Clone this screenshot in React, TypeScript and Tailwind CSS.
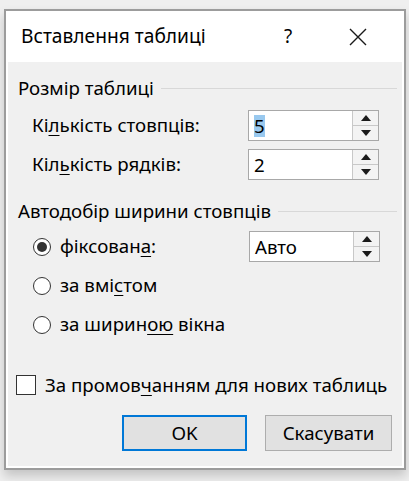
import React from 'react';

const font = { fontFamily: '"Noto Sans", "Open Sans", sans-serif' };

const Arrows = () => (
  <div className="flex w-[26px] flex-col border-l border-[#c8c8c8] bg-[#f3f3f3]">
    <div className="flex flex-1 items-center justify-center border-b border-[#c8c8c8]">
      <svg width="10" height="6" viewBox="0 0 10 6"><path d="M0 6 L5 0 L10 6 Z" fill="#1a1a1a" /></svg>
    </div>
    <div className="flex flex-1 items-center justify-center">
      <svg width="10" height="6" viewBox="0 0 10 6"><path d="M0 0 L10 0 L5 6 Z" fill="#1a1a1a" /></svg>
    </div>
  </div>
);

const SpinBox = ({ value, selected }: { value: string; selected?: boolean }) => (
  <div className="flex h-[31px] w-[131px] border border-[#a8a8a8] bg-white">
    <div className="flex flex-1 items-center pl-[5px]">
      <span className={selected ? 'bg-[#99c9ef] leading-[22px]' : 'leading-[22px]'}>{value}</span>
    </div>
    <Arrows />
  </div>
);

const Radio = ({ checked }: { checked?: boolean }) => (
  <div className="flex h-[18px] w-[18px] items-center justify-center rounded-full border border-[#333] bg-white">
    {checked && <div className="h-[10px] w-[10px] rounded-full bg-[#333]" />}
  </div>
);

const GroupHeader = ({ title }: { title: string }) => (
  <div className="flex h-[24px] items-center gap-[7px] pl-[10px] pr-[5px]">
    <span className="whitespace-nowrap">{title}</span>
    <div className="h-0 flex-1 border-t border-[#d8d8d8]" />
  </div>
);

const U = ({ children }: { children: React.ReactNode }) => (
  <span className="underline underline-offset-[3px] decoration-1">{children}</span>
);

export default function App() {
  return (
    <div className="h-[481px] w-[409px] bg-[#efefef] pl-[4px] pt-[9px] text-[18.7px] text-black" style={font}>
      <div className="flex h-[461px] w-[402px] flex-col border-2 border-[#9c9c9c] bg-white shadow-[0_6px_10px_rgba(0,0,0,0.18)]">
        {/* Title bar */}
        <div className="flex h-[51px] items-center pl-[15px]">
          <span className="flex-1 text-[19.2px]">Вставлення таблиці</span>
          <span className="w-[20px] text-center text-[19px]">?</span>
          <div className="flex w-[106px] justify-center pl-[13px]">
            <svg width="18" height="18" viewBox="0 0 18 18">
              <path d="M1 1 L17 17 M17 1 L1 17" stroke="#1a1a1a" strokeWidth="1.4" />
            </svg>
          </div>
        </div>

        {/* Body */}
        <div className="mx-[2px] mb-[2px] flex flex-1 flex-col bg-[#f0f0f0]">
          <div className="h-[14px]" />
          <GroupHeader title="Розмір таблиці" />

          <div className="mt-[10px] flex h-[31px] items-center pl-[24px]">
            <span className="w-[216px]">Кі<U>л</U>ькість стовпців:</span>
            <SpinBox value="5" selected />
          </div>
          <div className="mt-[8px] flex h-[31px] items-center pl-[24px]">
            <span className="w-[216px]">Кіл<U>ь</U>кість рядків:</span>
            <SpinBox value="2" />
          </div>

          <div className="h-[19px]" />
          <GroupHeader title="Автодобір ширини стовпців" />

          <div className="mt-[8px] flex h-[31px] items-center pl-[25px]">
            <Radio checked />
            <span className="ml-[9px] w-[189px]">фіксован<U>а</U>:</span>
            <SpinBox value="Авто" />
          </div>
          <div className="mt-[8px] flex h-[31px] items-center pl-[25px]">
            <Radio />
            <span className="ml-[9px]">за вмі<U>с</U>том</span>
          </div>
          <div className="mt-[8px] flex h-[31px] items-center pl-[25px]">
            <Radio />
            <span className="ml-[9px]">за ширин<U>ою</U> вікна</span>
          </div>

          <div className="mt-[33px] flex h-[24px] items-center pl-[8px]">
            <div className="h-[20px] w-[20px] border border-[#333] bg-white" />
            <span className="ml-[9px] whitespace-nowrap">За промов<U>ч</U>анням для нових таблиць</span>
          </div>

          <div className="mt-[18px] flex gap-[18px] pl-[114px]">
            <button className="flex h-[36px] w-[125px] items-center justify-center border-2 border-[#0078d7] bg-[#e1e1e1]">
              OK
            </button>
            <button className="flex h-[36px] w-[127px] items-center justify-center border border-[#adadad] bg-[#e1e1e1]">
              Скасувати
            </button>
          </div>
        </div>
      </div>
    </div>
  );
}
